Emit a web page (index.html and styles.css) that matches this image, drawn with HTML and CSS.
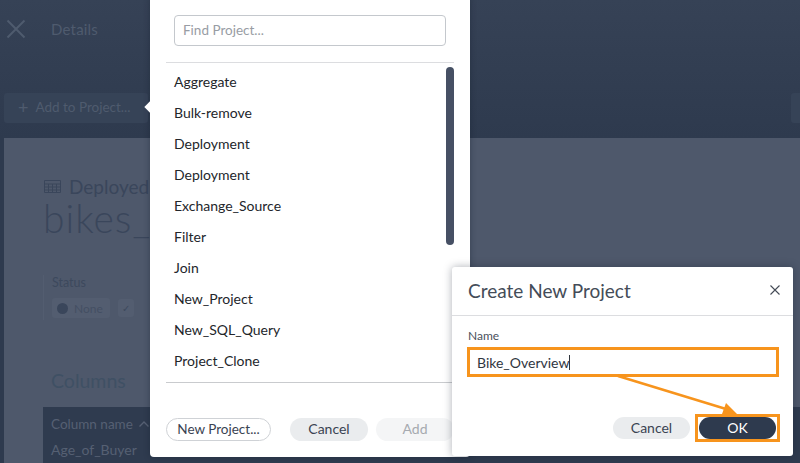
FILE: index.html
```html
<!DOCTYPE html>
<html lang="en">
<head>
<meta charset="utf-8">
<title>Create New Project</title>
<link rel="stylesheet" href="styles.css">
</head>
<body>
<div class="app">
  <header class="topbar">
    <svg class="close-x" width="22" height="22" viewBox="0 0 22 22"><path d="M2.5 2.5 L19.5 19.5 M19.5 2.5 L2.5 19.5"/></svg>
    <span class="topbar-title">Details</span>
  </header>
  <div class="toolbar">
    <div class="add-btn"><span class="plus">+</span><span>Add to Project...</span></div>
    <div class="toolbar-end"></div>
  </div>
  <main class="sheet">
    <div class="kicker">
      <svg class="table-icon" width="17" height="13" viewBox="0 0 17 13"><path d="M.5.5h16v12H.5zM.5 4h16M.5 7h16M.5 10h16M4.5 4v9M8.5 4v9M12.5 4v9"/></svg>
      <span>Deployed</span>
    </div>
    <h1 class="bigname">bikes_</h1>
    <div class="status">
      <div class="status-label">Status</div>
      <div class="status-row">
        <span class="pill"><i class="dot"></i>None</span>
        <span class="check">✓</span>
      </div>
    </div>
    <h2 class="columns">Columns</h2>
    <div class="table">
      <div class="th">Column name <svg class="caret" width="10" height="6" viewBox="0 0 10 6"><path d="M.5 5.5L5 1l4.5 4.5"/></svg></div>
      <div class="td">Age_of_Buyer</div>
    </div>
  </main>
</div>

<section class="picker">
  <div class="search-wrap"><div class="search">Find Project...</div></div>
  <div class="list-area">
    <ul class="list">
      <li>Aggregate</li>
      <li>Bulk-remove</li>
      <li>Deployment</li>
      <li>Deployment</li>
      <li>Exchange_Source</li>
      <li>Filter</li>
      <li>Join</li>
      <li>New_Project</li>
      <li>New_SQL_Query</li>
      <li>Project_Clone</li>
    </ul>
    <div class="scrollbar"></div>
  </div>
  <div class="picker-foot">
    <button class="btn outline">New Project...</button>
    <button class="btn grey w78">Cancel</button>
    <button class="btn faint w78">Add</button>
  </div>
</section>
<div class="pointer"></div>

<section class="dialog">
  <div class="dialog-head">
    <span class="dialog-title">Create New Project</span>
    <svg class="dialog-x" width="10" height="10" viewBox="0 0 10 10"><path d="M.5.5l9 9M9.5.5l-9 9"/></svg>
  </div>
  <div class="dialog-body">
    <label class="name-label">Name</label>
    <div class="name-input"><span>Bike_Overview</span><i class="cursor"></i></div>
  </div>
  <div class="dialog-foot">
    <button class="btn grey w77">Cancel</button>
    <span class="ok-mark"><button class="btn dark">OK</button></span>
  </div>
</section>

<svg class="arrow" width="800" height="463" viewBox="0 0 800 463">
  <path d="M618 376 L726 409" fill="none" stroke="#f7941d" stroke-width="2.5"/>
  <path d="M737 414 L726 403 L722 414 Z" fill="#f7941d"/>
</svg>
</body>
</html>
```
FILE: styles.css
```css
* { box-sizing: border-box; }
html, body { margin: 0; height: 100%; }
body {
  width: 800px; height: 463px; overflow: hidden; position: relative;
  background: linear-gradient(#364256, #2e3a4e 138px);
  font-family: Lato, "Open Sans", "Liberation Sans", sans-serif;
}
button { font-family: inherit; border: 0; padding: 0; }

.app { height: 463px; display: flex; flex-direction: column; overflow: hidden; }
.topbar { height: 60px; display: flex; align-items: center; padding: 0 0 2px 5px; color: #4f5b6e; flex: none; }
.close-x path { stroke: #4f5b6e; stroke-width: 2; fill: none; }
.topbar-title { margin-left: 24px; font-size: 15px; letter-spacing: .2px; }
.toolbar { height: 78px; flex: none; display: flex; justify-content: space-between; padding: 33px 0 0 4px; }
.add-btn { width: 144px; height: 30px; background: #364357; border-radius: 3px; color: #4f5b6e; font-size: 13.5px; display: flex; align-items: center; padding: 0 0 3px 14px; gap: 7px; }
.plus { font-size: 18px; line-height: 1; }
.toolbar-end { width: 9px; height: 30px; background: #364357; border-radius: 3px 0 0 3px; }
.sheet { margin-left: 4px; flex: 1; background: #4e586b; padding: 39px 0 0 39px; color: #3a465b; }
.kicker { display: flex; align-items: center; gap: 8px; font-size: 19px; height: 18px; padding-left: 1px; }
.table-icon path { stroke: #3a465b; fill: none; }
.bigname { margin: 1px 0 0; font-size: 39px; font-weight: 300; letter-spacing: 1px; line-height: 44px; }
.status { margin-top: 35px; height: 45px; border-left: 1px solid #535d70; padding: 0 0 0 8px; }
.status-label { font-size: 12.5px; font-weight: 400; color: #3d495d; line-height: 15px; }
.status-row { display: flex; align-items: center; gap: 8px; margin-top: 8px; }
.pill { display: flex; align-items: center; gap: 6px; height: 20px; width: 58px; background: #535d70; color: #444f63; font-size: 12px; padding-left: 5px; border-radius: 3px; }
.dot { width: 11px; height: 11px; border-radius: 50%; background: #3a465b; }
.check { width: 16px; height: 18px; line-height: 18px; text-align: center; font-size: 10px; color: #3d495d; background: #535d70; border-radius: 3px; }
.columns { margin: 49px 0 0 8px; height: 38px; font-size: 19.5px; font-weight: 400; color: #3f5064; line-height: 24px; }
.table { background: #2f3b4f; height: 60px; color: #566073; font-size: 14px; padding: 8px 8px; }
.th { height: 26px; line-height: 18px; font-size: 13.5px; display: flex; align-items: center; gap: 6px; padding-bottom: 0; height: 18px; margin-bottom: 8px; }
.caret path { stroke: #566073; stroke-width: 1.4; fill: none; }
.td { line-height: 18px; }

.picker { position: absolute; left: 150px; top: -4px; width: 320px; height: 461px; background: #fff; border-radius: 4px; box-shadow: 0 0 6px rgba(20,30,45,.4); display: flex; flex-direction: column; }
.pointer { position: absolute; left: 146px; top: 103px; width: 8px; height: 8px; background: #fff; transform: rotate(45deg); }
.search-wrap { padding: 19px 24px 16px; height: 66px; flex: none; position: relative; }
.search { height: 31px; border: 1px solid #c4c8cd; border-radius: 4px; padding: 0 8px; font-size: 13.5px; line-height: 28px; color: #989da4; }
.list-area { margin: 0 16px; height: 321px; border-top: 1px solid #dcdde0; border-bottom: 1px solid #c9cbce; position: relative; flex: none; }
.list { list-style: none; margin: 0; padding: 4px 0 0 8px; }
.list li { height: 31px; line-height: 30px; font-size: 14px; color: #23262b; }
.scrollbar { position: absolute; right: 0; top: 4px; width: 8px; height: 178px; border-radius: 4px; background: #465064; }
.picker-foot { padding: 35px 0 0 16px; display: flex; align-items: center; gap: 19px; }
.picker-foot .btn { padding-bottom: 2px; }
.btn { height: 23px; border-radius: 12px; font-size: 14px; line-height: 20px; color: #3a4352; display: block; text-align: center; }
.outline { width: 105px; background: #fff; border: 1px solid #cfd2d6; font-size: 13.5px; }
.grey { background: #eaecee; }
.w78 { width: 78px; }
.w77 { width: 77px; height: 22px; }
.faint { background: #f4f5f6; color: #a6aab0; margin-left: -11px; }

.dialog { position: absolute; left: 452px; top: 267px; width: 341px; height: 189px; background: #fff; border-radius: 3px; box-shadow: 0 0 8px rgba(20,30,45,.35); display: flex; flex-direction: column; }
.dialog-head { height: 49px; border-bottom: 1px solid #dcdde0; display: flex; align-items: center; justify-content: space-between; padding: 0 13px 2px 16px; flex: none; }
.dialog-title { font-size: 19px; color: #444c58; }
.dialog-body { padding: 13px 15px 0; }
.name-label { display: block; font-size: 12px; color: #4a515c; line-height: 14px; margin-left: 1px; }
.name-input { margin-top: 4px; width: 312px; height: 30px; border: 3px solid #f7941d; display: flex; align-items: center; padding-left: 7px; font-size: 14px; color: #30363f; }
.cursor { width: 1px; height: 15px; background: #30363f; }
.dialog-foot { margin-top: 37px; display: flex; justify-content: flex-end; align-items: center; padding-right: 13px; gap: 5px; }
.ok-mark { border: 3px solid #f7941d; padding: 0 1px; display: block; height: 28px; }
.dark { background: #2e3a4e; color: #fff; width: 77px; height: 22px; line-height: 22px; }
.dialog-x path { stroke: #444b56; stroke-width: 1.1; fill: none; }

.arrow { position: absolute; left: 0; top: 0; pointer-events: none; }
```
